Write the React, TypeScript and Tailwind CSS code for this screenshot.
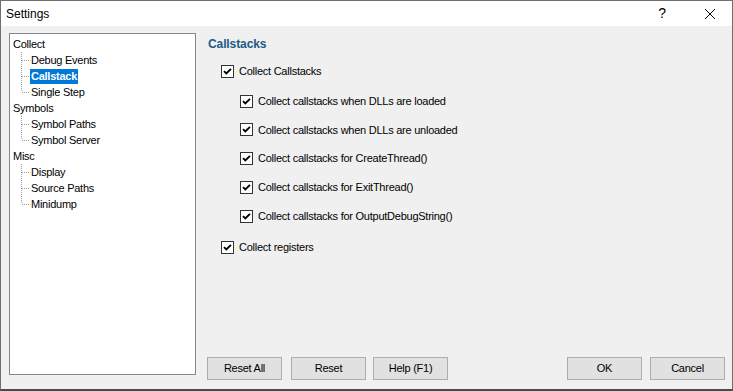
import React from "react";

function Check() {
  return (
    <span className="inline-flex w-[13px] h-[13px] shrink-0 items-center justify-center border border-[#333333] bg-white">
      <svg width="11" height="11" viewBox="0 0 11 11">
        <path d="M2 5.2 L4.3 7.5 L9 2.8" fill="none" stroke="#000" strokeWidth="1.9" />
      </svg>
    </span>
  );
}

function CheckRow({ label, indent }: { label: string; indent?: boolean }) {
  return (
    <div className={`flex items-center gap-[5px] h-[16px] ${indent ? "pl-[33px]" : "pl-[14px]"}`}>
      <Check />
      <span>{label}</span>
    </div>
  );
}

function Connector({ last }: { last?: boolean }) {
  return (
    <svg width="20" height="16" viewBox="0 0 20 16" className="shrink-0">
      <line x1="11.5" y1="0" x2="11.5" y2={last ? 8 : 16} stroke="#a0a0a0" strokeDasharray="1 1" />
      <line x1="12" y1="8.5" x2="20" y2="8.5" stroke="#a0a0a0" strokeDasharray="1 1" />
    </svg>
  );
}

function Group({ title, items, selected }: { title: string; items: string[]; selected?: string }) {
  return (
    <div>
      <div className="h-[16px] leading-[16px] pl-[3px]">{title}</div>
      {items.map((it, i) => (
        <div key={it} className="flex h-[16px] items-center">
          <Connector last={i === items.length - 1} />
          <span
            className={`px-[1px] leading-[15px] ${
              it === selected ? "bg-[#0078d7] text-white font-bold" : ""
            }`}
          >
            {it}
          </span>
        </div>
      ))}
    </div>
  );
}

function Btn({ label }: { label: string }) {
  return (
    <div className="w-[75px] h-[23px] flex items-center justify-center border border-[#adadad] bg-[#e1e1e1] text-black">
      {label}
    </div>
  );
}

export default function App() {
  return (
    <div className="w-[733px] h-[391px] flex flex-col border border-[#6f6f6f] border-b-[2px] border-b-[#4a4a4a] bg-[#f0f0f0] font-['Liberation_Sans',sans-serif] text-[11px] tracking-[-0.25px] text-black overflow-hidden">
      <div className="h-[25px] shrink-0 bg-white flex items-center tracking-normal">
        <span className="pl-[5px] text-[12px]">Settings</span>
        <div className="flex-1" />
        <span className="text-[14px] mr-[38px]">?</span>
        <svg width="12" height="12" viewBox="0 0 12 12" className="mr-[16px]">
          <path d="M1 1 L11 11 M11 1 L1 11" stroke="#000" strokeWidth="1" />
        </svg>
      </div>
      <div className="flex-1 flex items-start pt-[7px] pl-[8px] pr-[7px]">
        <div className="w-[187px] h-[342px] shrink-0 border border-[#828790] bg-white pt-[2px]">
          <Group title="Collect" items={["Debug Events", "Callstack", "Single Step"]} selected="Callstack" />
          <Group title="Symbols" items={["Symbol Paths", "Symbol Server"]} />
          <Group title="Misc" items={["Display", "Source Paths", "Minidump"]} />
        </div>
        <div className="flex-1 h-[347px] flex flex-col pl-[11px]">
          <div className="pt-[2px] font-bold text-[12px] tracking-[-0.1px] text-[#1b5a86] h-[18px] leading-[18px] pl-[1px]">Callstacks</div>
          <div className="mt-[12px]">
            <CheckRow label="Collect Callstacks" />
          </div>
          <div className="mt-[14px] flex flex-col gap-[12.75px]">
            <CheckRow indent label="Collect callstacks when DLLs are loaded" />
            <CheckRow indent label="Collect callstacks when DLLs are unloaded" />
            <CheckRow indent label="Collect callstacks for CreateThread()" />
            <CheckRow indent label="Collect callstacks for ExitThread()" />
            <CheckRow indent label="Collect callstacks for OutputDebugString()" />
          </div>
          <div className="mt-[15px]">
            <CheckRow label="Collect registers" />
          </div>
          <div className="flex-1" />
          <div className="flex items-center">
            <Btn label="Reset All" />
            <div className="w-[9px]" />
            <Btn label="Reset" />
            <div className="w-[7px]" />
            <Btn label="Help (F1)" />
            <div className="flex-1" />
            <Btn label="OK" />
            <div className="w-[8px]" />
            <Btn label="Cancel" />
          </div>
        </div>
      </div>
    </div>
  );
}
